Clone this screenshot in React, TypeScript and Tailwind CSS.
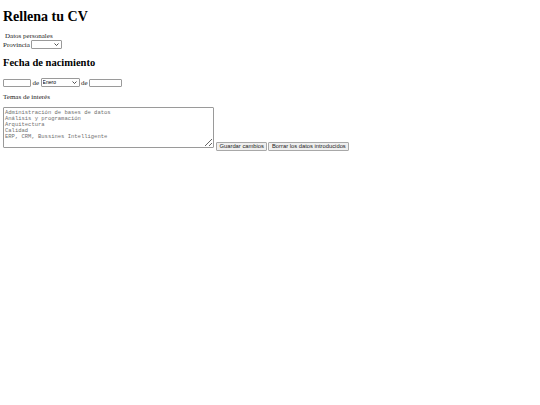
import React from "react";

const meses = [
  "Enero",
  "Febrero",
  "Marzo",
  "Abril",
  "Mayo",
  "Junio",
  "Julio",
  "Agosto",
  "Septiembre",
  "Octubre",
  "Noviembre",
  "Diciembre",
];

const temas = [
  "Administración de bases de datos",
  "Análisis y programación",
  "Arquitectura",
  "Calidad",
  "ERP, CRM, Bussines Intelligente",
];

const Chevron = () => (
  <svg
    viewBox="0 0 10 6"
    className="pointer-events-none absolute right-[3px] top-[3px] h-[3px] w-[5px]"
  >
    <path d="M1 1l4 4 4-4" fill="none" stroke="#222" strokeWidth="1.6" />
  </svg>
);

const Select = ({ width, options }: { width: string; options: string[] }) => (
  <span className="relative inline-block">
    <select
      className={`${width} block h-[9px] appearance-none rounded-[1px] border border-[#9a9a9a] bg-white pl-[1px] [font-family:'Liberation_Sans',sans-serif] text-[5px] leading-[7px] text-black outline-none`}
    >
      {options.map((o) => (
        <option key={o}>{o}</option>
      ))}
    </select>
    <Chevron />
  </span>
);

export default function App() {
  return (
    <div className="min-h-screen bg-white px-[3px] [font-family:'Liberation_Serif',serif] text-[7px] leading-[8px] text-[#222]">
      <h1 className="pt-[9px] text-[14px] font-bold leading-[16px] text-black">
        Rellena tu CV
      </h1>

      <fieldset className="mt-[7px]">
        <legend className="px-[2px]">Datos personales</legend>
        <label className="flex items-center gap-[1px]">
          Provincia
          <Select width="w-[31px]" options={["", "Madrid", "Barcelona", "Valencia"]} />
        </label>
      </fieldset>

      <h2 className="mt-[8px] text-[10.5px] font-bold leading-[12px] text-black">
        Fecha de nacimiento
      </h2>

      <div className="mt-[9px] flex items-center gap-[1.5px]">
        <input
          type="text"
          className="h-[8px] w-[28px] rounded-[1px] border border-[#9a9a9a] bg-white outline-none"
        />
        <span>de</span>
        <Select width="w-[39px]" options={meses} />
        <span>de</span>
        <input
          type="text"
          className="h-[8px] w-[33px] rounded-[1px] border border-[#9a9a9a] bg-white outline-none"
        />
      </div>

      <p className="mt-[6px]">Temas de interés</p>

      <div className="mt-[6px] flex items-end gap-[2px]">
        <textarea
          className="h-[41px] w-[211px] rounded-[1px] border border-[#9a9a9a] bg-white px-[1px] py-[1.5px] [font-family:'Liberation_Mono',monospace] text-[5.5px] leading-[6.2px] outline-none placeholder:text-[#707070]"
          placeholder={temas.join("\n")}
        />
        <div className="mb-[-3px] flex gap-[1px] [font-family:'Liberation_Sans',sans-serif] text-[5.8px] leading-[7px] text-[#222]">
          <button className="h-[9px] rounded-[1px] border border-[#a8a8a8] bg-[#efefef] px-[2.5px]">
            Guardar cambios
          </button>
          <button className="h-[9px] rounded-[1px] border border-[#a8a8a8] bg-[#efefef] px-[2.5px]">
            Borrar los datos introducidos
          </button>
        </div>
      </div>
    </div>
  );
}
